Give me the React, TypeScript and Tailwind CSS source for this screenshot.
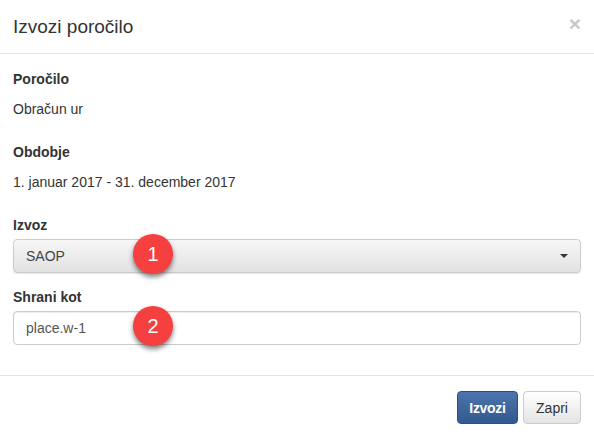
import * as React from "react";

function Marker({ n }: { n: number }) {
  return (
    <span className="absolute left-[120px] top-[-5px] flex h-[40px] w-[40px] items-center justify-center rounded-full bg-[#f64040] text-[20px] leading-none text-white shadow-[0_3px_5px_rgba(0,0,0,0.5)]">
      {n}
    </span>
  );
}

export default function App() {
  return (
    <div className="h-[437px] w-[594px] overflow-hidden bg-white font-['Liberation_Sans',Arial,sans-serif] text-[14px] leading-[20px] text-[#333]">
      <header className="flex h-[54px] items-center justify-between border-b border-[#e5e5e5] pl-[13px] pr-[13px]">
        <h4 className="text-[19px] leading-[25px] text-[#333]">Izvozi poročilo</h4>
        <span className="mt-[-7px] text-[21px] font-bold leading-none text-[#c8c8c8]">×</span>
      </header>

      <div className="px-[13px] pt-[15px] pb-[30px]">
        <div className="font-bold">Poročilo</div>
        <p className="mt-[10px]">Obračun ur</p>

        <div className="mt-[23px] font-bold">Obdobje</div>
        <p className="mt-[10px]">1. januar 2017 - 31. december 2017</p>

        <div className="mt-[23px] mb-[4px] font-bold">Izvoz</div>
        <div className="relative">
          <div className="flex h-[34px] items-center justify-between rounded-[4px] border border-[#ccc] bg-gradient-to-b from-[#f7f7f7] to-[#e2e2e2] pl-[12px] pr-[12px] text-[#444] shadow-[0_1px_1px_rgba(0,0,0,0.1)]">
            <span>SAOP</span>
            <span className="h-0 w-0 border-x-[4px] border-t-[4px] border-x-transparent border-t-[#333]" />
          </div>
          <Marker n={1} />
        </div>

        <div className="mt-[14px] mb-[4px] font-bold">Shrani kot</div>
        <div className="relative">
          <input
            readOnly
            value="place.w-1"
            className="block h-[34px] w-full rounded-[4px] border border-[#ccc] bg-white px-[12px] text-[#555] outline-none shadow-[inset_0_1px_1px_rgba(0,0,0,0.075)]"
          />
          <Marker n={2} />
        </div>
      </div>

      <footer className="flex justify-end gap-[5px] border-t border-[#e5e5e5] pt-[15px] pr-[13px]">
        <button
          type="button"
          className="h-[33px] w-[61px] rounded-[4px] border border-[#2b4f85] bg-gradient-to-b from-[#4a75ad] to-[#33598f] font-bold tracking-[-0.3px] text-white"
        >
          Izvozi
        </button>
        <button
          type="button"
          className="h-[33px] w-[58px] rounded-[4px] border border-[#ccc] bg-gradient-to-b from-white to-[#e4e4e4] text-[#333]"
        >
          Zapri
        </button>
      </footer>
    </div>
  );
}
